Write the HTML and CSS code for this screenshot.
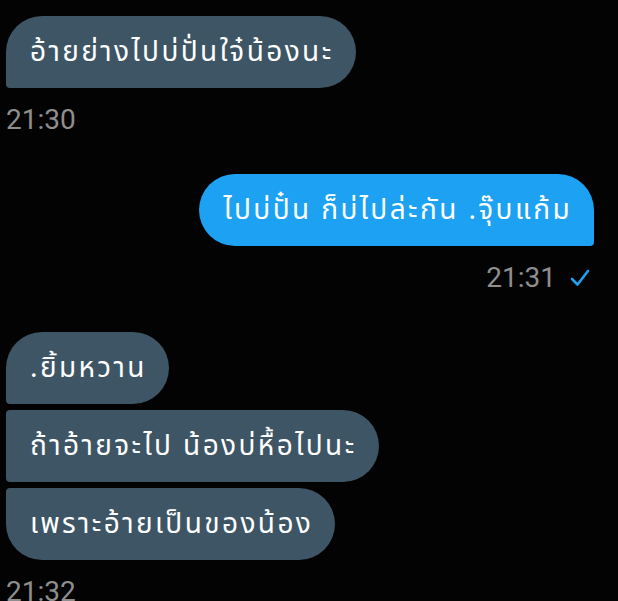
FILE: index.html
```html
<!DOCTYPE html>
<html lang="th">
<head>
<meta charset="utf-8">
<link rel="stylesheet" href="styles.css">
</head>
<body>
<div class="chat">
  <div class="group in">
    <div class="bubble first last">อ้ายย่างไปบ่ปั่นใจ๋น้องนะ</div>
    <div class="time">21:30</div>
  </div>
  <div class="group out">
    <div class="bubble first last">ไปบ่ปั๋น ก็บ่ไปล่ะกัน .จุ๊บแก้ม</div>
    <div class="time">21:31
      <svg class="check" viewBox="0 0 20 18" width="20" height="18"><path d="M2 10 L7.5 15.5 L18 2" fill="none" stroke="#1da1f2" stroke-width="2.6" stroke-linecap="round" stroke-linejoin="round"/></svg>
    </div>
  </div>
  <div class="group in">
    <div class="bubble first">.ยิ้มหวาน</div>
    <div class="bubble mid">ถ้าอ้ายจะไป น้องบ่หื้อไปนะ</div>
    <div class="bubble last">เพราะอ้ายเป็นของน้อง</div>
    <div class="time">21:32</div>
  </div>
</div>
</body>
</html>
```
FILE: styles.css
```css
* { box-sizing: border-box; }
html, body { margin: 0; background: #030303; }
body {
  font-family: "Noto Sans Thai", "Noto Sans", Roboto, sans-serif;
  width: 618px;
  height: 601px;
  overflow: hidden;
}
.chat {
  display: flex;
  flex-direction: column;
  padding: 16px 24px 0 6px;
  gap: 38px;
}
.group {
  display: flex;
  flex-direction: column;
  gap: 6px;
}
.group.in { align-items: flex-start; }
.group.out { align-items: flex-end; }
.bubble {
  height: 72px;
  padding: 0 22px 0 24px;
  display: flex;
  align-items: center;
  font-size: 28px;
  letter-spacing: 2.4px;
  color: #fff;
  white-space: nowrap;
  border-radius: 36px;
}
.in .bubble { background: #3d5564; }
.out .bubble { background: #1da1f2; }
.in .bubble.first { border-bottom-left-radius: 4px; }
.in .bubble.mid { border-top-left-radius: 4px; border-bottom-left-radius: 4px; }
.in .bubble.last { border-top-left-radius: 4px; }
.in .bubble.first.last { border-radius: 36px 36px 36px 4px; }
.out .bubble.first.last { border-radius: 36px 36px 4px 36px; }
.time {
  font-family: Roboto, sans-serif;
  font-size: 28px;
  color: #8e8e8e;
  line-height: 32px;
  margin-top: 10px;
  display: flex;
  align-items: center;
  gap: 14px;
}
.out .time { padding-right: 4px; }
.check { display: block; }
```
